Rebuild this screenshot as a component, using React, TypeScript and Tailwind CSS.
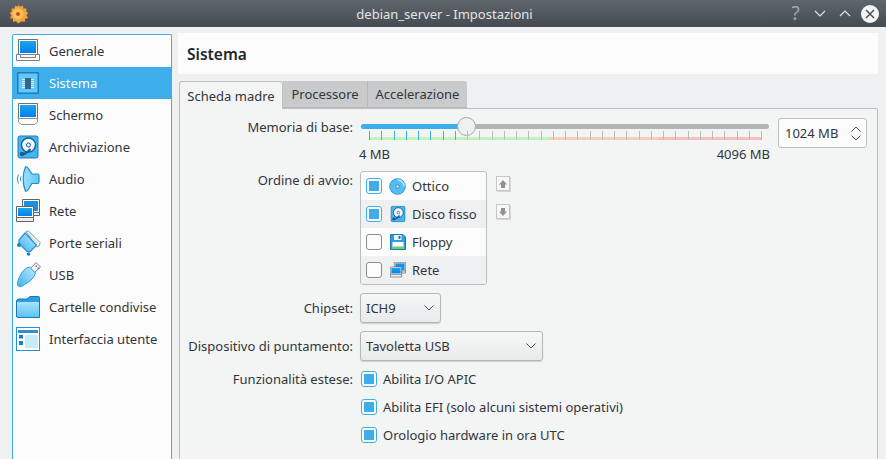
import { ReactNode } from "react";

const Monitor = ({ tray = false }: { tray?: boolean }) => (
  <svg width="24" height="24" viewBox="0 0 24 24">
    <path d="M2.500 .5h19v15h-19z" fill="#fff" stroke="#6b7278" />
    <rect x="4" y="2" width="16" height="12" fill="url(#scr)" />
    {tray ? (
      <>
        <path d="M.5 15.500h23v6h-23z" fill="#f8f9f9" stroke="#7b8187" />
        <path d="M4.500 15.500v3h15v-3" fill="none" stroke="#7b8187" />
      </>
    ) : (
      <path d="M2.500 15.500h19v3.500l-3 2.500h-13l-3-2.500z" fill="#fbfbfb" stroke="#8a9096" />
    )}
  </svg>
);

const Chip = () => (
  <svg width="24" height="24" viewBox="0 0 24 24">
    <rect x="1" y="1" width="22" height="22" rx="1" fill="#1b7dc0" />
    <rect x="2.500" y="2.500" width="19" height="19" fill="#62c8f7" />
    <path d="M6 8.500h12M6 10.500h12M6 12.500h12M6 14.500h12M6 16.500h12" stroke="#d8f0fb" strokeWidth="1" />
    <rect x="9" y="7" width="6" height="11" fill="#35658a" />
  </svg>
);

const Storage = () => (
  <svg width="22" height="24" viewBox="0 0 22 24">
    <rect x="1" y="1" width="20" height="22" rx="2" fill="#45b4ef" stroke="#1d78bb" />
    <circle cx="11.500" cy="10" r="7" fill="#f2fafe" stroke="#175f95" strokeWidth="1.400" />
    <circle cx="11.500" cy="10" r="2" fill="#f2fafe" stroke="#175f95" />
    <path d="M4 19.500c3 0 6-1.500 9.500-5.500" fill="none" stroke="#175f95" strokeWidth="2.200" />
    <circle cx="5" cy="19" r="2.200" fill="#175f95" />
  </svg>
);

const Speaker = () => (
  <svg width="24" height="26" viewBox="0 0 24 26">
    <path d="M2.500 8.500c-1.500 3-1.500 6 0 9M5 10.500c-.8 1.500-.8 3.500 0 5" fill="none" stroke="#2a95da" strokeWidth="1" />
    <path d="M9.500 .8c-1.700 4-2.300 8-2.300 12.200s.6 8.200 2.300 12.200c1 .3 1.700-.3 2.300-1l4.200-6.700h5.500a1.500 1.500 0 0 0 1.500-1.500V9.500A1.500 1.500 0 0 0 21.500 8H16l-4.200-6.200c-.6-.7-1.300-1.300-2.300-1z" fill="url(#spk)" stroke="#1f8ad2" strokeWidth="1.200" />
  </svg>
);

const Network = ({ size = 24 }: { size?: number }) => (
  <svg width={size} height={size} viewBox="0 0 24 24">
    <path d="M6.500 .5h17v13h-17z" fill="#fff" stroke="#5f666c" />
    <rect x="8" y="2" width="14" height="10" fill="#1b8fe0" />
    <path d="M.5 7.500h17v11h-17z" fill="#fff" stroke="#5f666c" />
    <rect x="2" y="9" width="14" height="8" fill="url(#scr)" />
    <path d="M.5 18.500h17v4h-17z" fill="#eceeef" stroke="#5f666c" />
    <path d="M17.500 13.500h6v3h-6z" fill="#eceeef" stroke="#5f666c" />
  </svg>
);

const Serial = () => (
  <svg width="25" height="26" viewBox="0 0 25 26">
    <path d="M10 1.500 12.500 1 24 12.500l-.5 3L21 17z" fill="#fff" stroke="#6f9fc0" />
    <path d="M12 3.500 21.500 13M14 3 22.500 11.500" stroke="#b9c2c7" strokeWidth="1" />
    <path d="M9 3 20.500 15 14.500 21.500H11L3 13.500V10z" fill="url(#usbg)" stroke="#2a8fd8" strokeWidth="1.200" />
    <circle cx="3" cy="15" r="2" fill="#1f80c2" />
    <circle cx="12.500" cy="24" r="1.800" fill="#1f80c2" />
  </svg>
);

const Usb = () => (
  <svg width="25" height="26" viewBox="0 0 25 26">
    <path d="M14.500 6.500 20 .5l4.500 4.500-6 5.500z" fill="#fdfdfd" stroke="#7b8187" />
    <path d="M19.500 3.500h1.500V5h-1.500zM21.500 5.500H23V7h-1.500z" fill="#5f666c" />
    <path d="M13.500 5 19.500 11c-1 3.500-3.500 6.500-7 9l-7 4.500c-2 1-4.500-.5-4-3 .5-4 2.500-8 4.500-11 2-3 4.500-5 7.500-5.500z" fill="url(#usbg)" stroke="#2f9be0" />
  </svg>
);

const Folder = () => (
  <svg width="24" height="22" viewBox="0 0 24 22">
    <path d="M.5 4.500 2 3h9l3-2.500h8.500a1 1 0 0 1 1 1V21.500H2a1.500 1.500 0 0 1-1.500-1.500z" fill="#2d9fe2" stroke="#1d78bb" />
    <path d="M1 6h22v15H2.500a1.500 1.500 0 0 1-1.500-1.500z" fill="url(#fold)" />
  </svg>
);

const Ui = () => (
  <svg width="24" height="24" viewBox="0 0 24 24">
    <rect x=".5" y=".5" width="23" height="23" fill="#fff" stroke="#2d8fd4" />
    <rect x="2" y="3" width="20" height="3" fill="#2d8fd4" />
    <rect x="3" y="8" width="4" height="3.500" fill="#1b7ccc" />
    <rect x="3" y="14" width="4" height="4" fill="#1b7ccc" />
    <rect x="9" y="8" width="13" height="13" fill="#c9ecfb" />
  </svg>
);

const Disc = () => (
  <svg width="17" height="17" viewBox="0 0 17 17">
    <circle cx="8.500" cy="8.500" r="7.800" fill="#55bdf2" stroke="#2a95d8" />
    <path d="M8.500 2a6.500 6.500 0 0 1 6.500 6.500" fill="none" stroke="#b8e6fb" strokeWidth="1.500" />
    <circle cx="8.500" cy="8.500" r="1.600" fill="#e8f7fe" stroke="#1d78bb" strokeWidth=".8" />
  </svg>
);

const Floppy = () => (
  <svg width="16" height="16" viewBox="0 0 16 16">
    <path d="M.5.5h12.500l2.500 2.500v12.500h-15z" fill="#2d9fe2" stroke="#1d78bb" />
    <rect x="4" y="1" width="7.500" height="5" fill="#eaf7fe" />
    <rect x="8.500" y="2" width="2" height="3" fill="#1d78bb" />
    <rect x="2.500" y="8" width="11" height="7" fill="#fff" />
    <rect x="2.500" y="12.500" width="11" height="2.500" fill="#6fd05b" />
  </svg>
);

const Check = ({ on }: { on: boolean }) => (
  <span className={`flex h-[16px] w-[16px] shrink-0 items-center justify-center rounded-[3px] border bg-[#fcfcfc] ${on ? "border-[#3daee9]" : "border-[#8a8d8f]"}`}>
    {on && <span className="h-[10px] w-[10px] bg-[#3daee9]" />}
  </span>
);

const Chevron = ({ up = false }: { up?: boolean }) => (
  <svg width="10" height="6" viewBox="0 0 10 6" className="block">
    <path d={up ? "M.5 5.500 5 1l4.500 4.500" : "M.5.5 5 5 9.500.5"} fill="none" stroke="#4d4d4d" strokeWidth="1" />
  </svg>
);

const nav: { label: string; icon: ReactNode; active?: boolean }[] = [
  { label: "Generale", icon: <Monitor tray /> },
  { label: "Sistema", icon: <Chip />, active: true },
  { label: "Schermo", icon: <Monitor /> },
  { label: "Archiviazione", icon: <Storage /> },
  { label: "Audio", icon: <Speaker /> },
  { label: "Rete", icon: <Network /> },
  { label: "Porte seriali", icon: <Serial /> },
  { label: "USB", icon: <Usb /> },
  { label: "Cartelle condivise", icon: <Folder /> },
  { label: "Interfaccia utente", icon: <Ui /> },
];

const boot = [
  { label: "Ottico", on: true, icon: <Disc /> },
  { label: "Disco fisso", on: true, icon: <Storage /> },
  { label: "Floppy", on: false, icon: <Floppy /> },
  { label: "Rete", on: false, icon: <Network size={16} /> },
];

const ticks = Array.from({ length: 33 }, (_, i) => i);

const Row = ({ label, className, children }: { label: string; className: string; children: ReactNode }) => (
  <div className={`flex ${className}`}>
    <div className="w-[174px] shrink-0 pr-[1px] text-right">{label}</div>
    <div className="ml-[6px] min-w-0 flex-1">{children}</div>
  </div>
);

const Combo = ({ label, width }: { label: string; width: string }) => (
  <div className={`flex h-[30px] items-center justify-between rounded-[3px] border border-[#b4b6b7] bg-gradient-to-b from-[#f5f6f6] to-[#e9eaeb] pl-[5px] pr-[6px] shadow-[0_1px_1px_rgba(0,0,0,0.15)] ${width}`}>
    <span>{label}</span>
    <Chevron />
  </div>
);

const MoveButton = ({ up }: { up: boolean }) => (
  <div className="flex h-[15px] w-[14px] items-center justify-center border border-[#c4c6c7] bg-[#f7f7f7] shadow-[1px_1px_0_#d5d6d7]">
    <svg width="10" height="10" viewBox="0 0 10 10">
      <path d={up ? "M5 1 9 5.500H7V9H3V5.500H1z" : "M5 9 9 4.500H7V1H3v3.500H1z"} fill="#8f9193" />
    </svg>
  </div>
);

export default function App() {
  return (
    <div className="flex h-[459px] w-[886px] flex-col overflow-hidden bg-[#eff0f1] font-['Noto_Sans',sans-serif] text-[13px] leading-[18px] text-[#31363b]">
      <svg width="0" height="0" className="absolute">
        <defs>
          <linearGradient id="scr" x1="0" y1="0" x2="0" y2="1">
            <stop offset="0" stopColor="#1ca7e8" />
            <stop offset="1" stopColor="#0080f0" />
          </linearGradient>
          <linearGradient id="fold" x1="0" y1="0" x2="0" y2="1">
            <stop offset="0" stopColor="#a8e4fc" />
            <stop offset="1" stopColor="#5cc3f5" />
          </linearGradient>
          <linearGradient id="usbg" x1="1" y1="0" x2="0" y2="1">
            <stop offset="0" stopColor="#c0ecfd" />
            <stop offset="1" stopColor="#3fb1f2" />
          </linearGradient>
          <linearGradient id="spk" x1="0" y1="0" x2="1" y2="0">
            <stop offset="0" stopColor="#9be0fb" />
            <stop offset="1" stopColor="#63c6f5" />
          </linearGradient>
        </defs>
      </svg>

      {/* title bar */}
      <div className="flex h-[27px] shrink-0 items-center bg-gradient-to-b from-[#5f666c] to-[#454b50] pl-[8px] pr-[7px] text-[#e3e5e6]">
        <svg width="20" height="20" viewBox="0 0 20 20">
          <path d="M10 .5l2 2.300 2.800-1.200.7 3 3-.1-.4 3 2.400 1.500-2 2.300 1.500 2.600-2.900.9-.2 3-3-.6L10 19.500l-1.900-2.300-3 .6-.2-3-2.900-.9 1.500-2.600L1.500 9l2.400-1.500-.4-3 3 .1.700-3 2.800 1.200z" fill="#f6a13a" />
          <circle cx="10" cy="10" r="5.500" fill="#f9c25c" />
          <circle cx="10" cy="10" r="2" fill="#c9500f" />
        </svg>
        <div className="flex-1 pl-[71px] text-center">debian_server - Impostazioni</div>
        <div className="flex items-center gap-[13px]">
          <span className="w-[11px] text-center text-[19px] leading-none text-[#a3a9ad]">?</span>
          <svg width="12" height="7" viewBox="0 0 12 7"><path d="M1 1l5 5 5-5" fill="none" stroke="#e3e5e6" strokeWidth="1.200" /></svg>
          <svg width="12" height="7" viewBox="0 0 12 7"><path d="M1 6l5-5 5 5" fill="none" stroke="#e3e5e6" strokeWidth="1.200" /></svg>
          <span className="-ml-[3px] flex h-[18px] w-[18px] items-center justify-center rounded-full bg-[#f4f5f5]">
            <svg width="10" height="10" viewBox="0 0 10 10"><path d="M1 1l8 8M9 1l-8 8" stroke="#4a5055" strokeWidth="1.500" /></svg>
          </span>
        </div>
      </div>

      <div className="flex min-h-0 flex-1 pl-[12px] pr-[8px] pt-[6px]">
        {/* side list */}
        <div className="-mb-[4px] mt-[1px] w-[160px] shrink-0 rounded-t-[2px] border border-b-0 border-[#3daee9] bg-[#fcfcfc]">
          {nav.map((item) => (
            <div key={item.label} className={`flex h-[32px] items-center ${item.active ? "bg-[#3daee9] text-[#fcfcfc]" : ""}`}>
              <div className="flex w-[36px] shrink-0 justify-center pr-[6px]">{item.icon}</div>
              <span>{item.label}</span>
            </div>
          ))}
        </div>

        <div className="ml-[6px] flex min-w-0 flex-1 flex-col">
          <div className="flex h-[41px] shrink-0 items-center bg-[#fcfcfc] pl-[9px] text-[15.500px] font-semibold text-[#232629]">Sistema</div>

          {/* tabs */}
          <div className="mt-[7px] flex h-[27px] shrink-0 pl-[1px]">
            <div className="z-10 -mb-[1px] flex w-[104px] items-center justify-center rounded-t-[3px] border border-b-0 border-[#bdbfc1] bg-[#f3f4f4]">Scheda madre</div>
            <div className="flex w-[85px] items-center justify-center border-b border-r border-[#b6b8ba] bg-[#c9cacb]">Processore</div>
            <div className="flex w-[99px] items-center justify-center rounded-tr-[3px] border-b border-[#b6b8ba] bg-[#c9cacb]">Accelerazione</div>
          </div>

          {/* pane */}
          <div className="-mb-[4px] ml-[1px] min-h-0 flex-1 rounded-tr-[2px] border border-b-0 border-[#bdbfc1] bg-[#f3f4f4] pt-[9px]">
            <Row label="Memoria di base:" className="h-[44px]">
              <div className="flex">
                <div className="ml-[1px] w-[408px] shrink-0">
                  <div className="relative mt-[6px] h-[5px] rounded-full bg-[#b3b4b4]">
                    <div className="h-full w-[106px] rounded-l-full bg-[#3daee9]" />
                    <div className="absolute left-[96px] top-[-7px] h-[19px] w-[19px] rounded-full border border-[#a8aaab] bg-[#eff0f1]" />
                  </div>
                  <div className="relative ml-[8px] mt-[2px] h-[9px] w-[393px]">
                    <div className="absolute bottom-0 left-0 right-0 flex h-[3px]">
                      <div className="w-[180px] bg-[#bdf5bd]" />
                      <div className="w-[109px] bg-[#f7cfb9]" />
                      <div className="flex-1 bg-[#fbbcbc]" />
                    </div>
                    <div className="absolute inset-0 flex justify-between">
                      {ticks.map((t) => (
                        <span key={t} className={`h-full w-px ${t < 8 ? "bg-[#3daee9]" : "bg-[#bcbdbd]"}`} />
                      ))}
                    </div>
                  </div>
                  <div className="-ml-[2px] -mr-[1px] mt-[5px] flex justify-between">
                    <span>4 MB</span>
                    <span>4096 MB</span>
                  </div>
                </div>
                <div className="ml-[9px] flex h-[30px] w-[89px] shrink-0 items-center justify-between rounded-[3px] border border-[#bcbebf] bg-[#fcfcfc] pl-[6px] pr-[5px]">
                  <span>1024 MB</span>
                  <span className="flex flex-col gap-[3px]"><Chevron up /><Chevron /></span>
                </div>
              </div>
            </Row>

            <Row label="Ordine di avvio:" className="mt-[9px] items-start pt-0">
              <div className="flex items-start">
                <div className="w-[127px] overflow-hidden rounded-[3px] border border-[#bcbebf] bg-[#fcfcfc]">
                  {boot.map((item, i) => (
                    <div key={item.label} className={`flex h-[28px] items-center pl-[5px] ${i % 2 ? "bg-[#eff0f1]" : ""}`}>
                      <Check on={item.on} />
                      <span className="ml-[7px] flex w-[17px] justify-center overflow-hidden">
                        {item.label === "Disco fisso" ? <span className="block scale-[0.7]"><Storage /></span> : item.icon}
                      </span>
                      <span className="ml-[6px]">{item.label}</span>
                    </div>
                  ))}
                </div>
                <div className="ml-[9px] mt-[5px] flex flex-col gap-[13px]">
                  <MoveButton up />
                  <MoveButton up={false} />
                </div>
              </div>
            </Row>

            <Row label="Chipset:" className="mt-[8px] h-[30px] items-center">
              <Combo label="ICH9" width="w-[81px]" />
            </Row>
            <Row label="Dispositivo di puntamento:" className="mt-[8px] h-[30px] items-center">
              <Combo label="Tavoletta USB" width="w-[183px]" />
            </Row>

            <Row label="Funzionalità estese:" className="mt-[9px] items-start">
              <div className="ml-[1px] flex flex-col gap-[10px]">
                {["Abilita I/O APIC", "Abilita EFI (solo alcuni sistemi operativi)", "Orologio hardware in ora UTC"].map((text) => (
                  <div key={text} className="flex h-[18px] items-center gap-[6px]">
                    <Check on />
                    <span>{text}</span>
                  </div>
                ))}
              </div>
            </Row>
          </div>
        </div>
      </div>
    </div>
  );
}
